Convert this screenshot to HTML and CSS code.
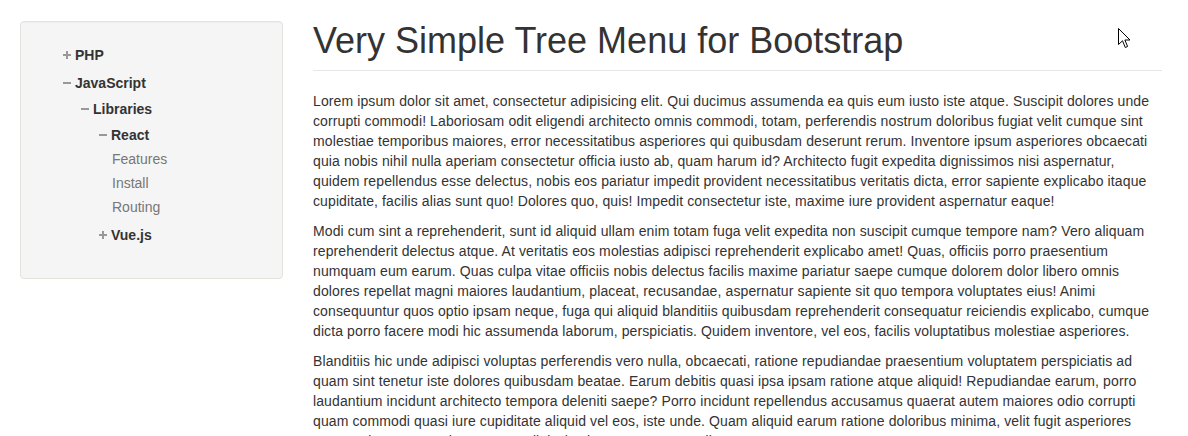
FILE: index.html
```html
<!DOCTYPE html>
<html lang="en">
<head>
<meta charset="utf-8">
<title>Very Simple Tree Menu for Bootstrap</title>
<link rel="stylesheet" href="styles.css">
</head>
<body>
<div class="page">
  <aside class="sidebar">
    <div class="well">
      <ul class="tree">
        <li class="node">
          <span class="label"><svg class="toggle" width="8" height="8" viewBox="0 0 8 8"><rect x="0" y="3" width="8" height="2"/><rect x="3" y="0" width="2" height="8"/></svg>PHP</span>
        </li>
        <li class="node">
          <span class="label"><svg class="toggle" width="8" height="8" viewBox="0 0 8 8"><rect x="0" y="3" width="8" height="2"/></svg>JavaScript</span>
          <ul class="tree sub">
            <li class="node">
              <span class="label"><svg class="toggle" width="8" height="8" viewBox="0 0 8 8"><rect x="0" y="3" width="8" height="2"/></svg>Libraries</span>
              <ul class="tree sub">
                <li class="node">
                  <span class="label"><svg class="toggle" width="8" height="8" viewBox="0 0 8 8"><rect x="0" y="3" width="8" height="2"/></svg>React</span>
                  <ul class="tree leaves">
                    <li class="leaf">Features</li>
                    <li class="leaf">Install</li>
                    <li class="leaf">Routing</li>
                  </ul>
                </li>
                <li class="node">
                  <span class="label"><svg class="toggle" width="8" height="8" viewBox="0 0 8 8"><rect x="0" y="3" width="8" height="2"/><rect x="3" y="0" width="2" height="8"/></svg>Vue.js</span>
                </li>
              </ul>
            </li>
          </ul>
        </li>
      </ul>
    </div>
  </aside>
  <main class="main">
    <div class="page-header">
      <h1>Very Simple Tree Menu for Bootstrap</h1>
    </div>
    <p>Lorem ipsum dolor sit amet, consectetur adipisicing elit. Qui ducimus assumenda ea quis eum iusto iste atque. Suscipit dolores unde corrupti commodi! Laboriosam odit eligendi architecto omnis commodi, totam, perferendis nostrum doloribus fugiat velit cumque sint molestiae temporibus maiores, error necessitatibus asperiores qui quibusdam deserunt rerum. Inventore ipsum asperiores obcaecati quia nobis nihil nulla aperiam consectetur officia iusto ab, quam harum id? Architecto fugit expedita dignissimos nisi aspernatur, quidem repellendus esse delectus, nobis eos pariatur impedit provident necessitatibus veritatis dicta, error sapiente explicabo itaque cupiditate, facilis alias sunt quo! Dolores quo, quis! Impedit consectetur iste, maxime iure provident aspernatur eaque!</p>
    <p>Modi cum sint a reprehenderit, sunt id aliquid ullam enim totam fuga velit expedita non suscipit cumque tempore nam? Vero aliquam reprehenderit delectus atque. At veritatis eos molestias adipisci reprehenderit explicabo amet! Quas, officiis porro praesentium numquam eum earum. Quas culpa vitae officiis nobis delectus facilis maxime pariatur saepe cumque dolorem dolor libero omnis dolores repellat magni maiores laudantium, placeat, recusandae, aspernatur sapiente sit quo tempora voluptates eius! Animi consequuntur quos optio ipsam neque, fuga qui aliquid blanditiis quibusdam reprehenderit consequatur reiciendis explicabo, cumque dicta porro facere modi hic assumenda laborum, perspiciatis. Quidem inventore, vel eos, facilis voluptatibus molestiae asperiores.</p>
    <p>Blanditiis hic unde adipisci voluptas perferendis vero nulla, obcaecati, ratione repudiandae praesentium voluptatem perspiciatis ad quam sint tenetur iste dolores quibusdam beatae. Earum debitis quasi ipsa ipsam ratione atque aliquid! Repudiandae earum, porro laudantium incidunt architecto tempora deleniti saepe? Porro incidunt repellendus accusamus quaerat autem maiores odio corrupti quam commodi quasi iure cupiditate aliquid vel eos, iste unde. Quam aliquid earum ratione doloribus minima, velit fugit asperiores nemo quisquam eveniet, tenetur adipisci voluptas quae. Expedita, sunt.</p>
  </main>
</div>
<svg class="cursor" width="13" height="21" viewBox="0 0 13 21"><path d="M0.5 0.5 L0.5 16.5 L4.5 12.8 L7.3 19.5 L9.6 18.5 L6.9 12 L12 12 Z" fill="#fff" stroke="#000" stroke-width="1" stroke-linejoin="miter"/></svg>
</body>
</html>
```
FILE: styles.css
```css
html {
  overflow: hidden;
}
body {
  margin: 0;
  background: #fff;
  font-family: "Liberation Sans", Arial, Helvetica, sans-serif;
  font-size: 14px;
  line-height: 20px;
  color: #333;
}
.page {
  display: flex;
  align-items: flex-start;
  gap: 30px;
  padding: 21px 0 0 20px;
}
.sidebar {
  width: 263px;
  flex: none;
}
.well {
  box-sizing: border-box;
  background: #f5f5f5;
  border: 1px solid #e3e3dd;
  border-radius: 4px;
  padding: 20px 19px 19px 19px;
  box-shadow: inset 0 1px 1px rgba(0, 0, 0, 0.03);
}
.tree {
  list-style: none;
  margin: 0;
  padding: 0 0 0 23px;
}
.well > .tree {
  margin-bottom: 11px;
}
.tree.sub {
  padding-left: 18px;
}
.tree.leaves {
  padding-left: 13px;
}
.node {
  margin-bottom: 2px;
}
.label {
  display: flex;
  align-items: center;
  height: 26px;
  font-weight: bold;
  color: #333;
}
.toggle {
  flex: none;
  fill: #999;
  margin-right: 4px;
}
.leaf {
  height: 22px;
  line-height: 22px;
  padding-bottom: 2px;
  color: #777;
}
.main {
  width: 849px;
  flex: none;
}
.page-header {
  padding-bottom: 9px;
  margin: 0 0 20px;
  border-bottom: 1px solid #e6e6e2;
}
h1 {
  margin: 0;
  font-size: 36px;
  font-weight: 500;
  line-height: 1.1;
  color: #333;
}
p {
  margin: 0 0 10px;
  letter-spacing: 0.11px;
}
.cursor {
  position: absolute;
  left: 1118px;
  top: 28px;
}
```
